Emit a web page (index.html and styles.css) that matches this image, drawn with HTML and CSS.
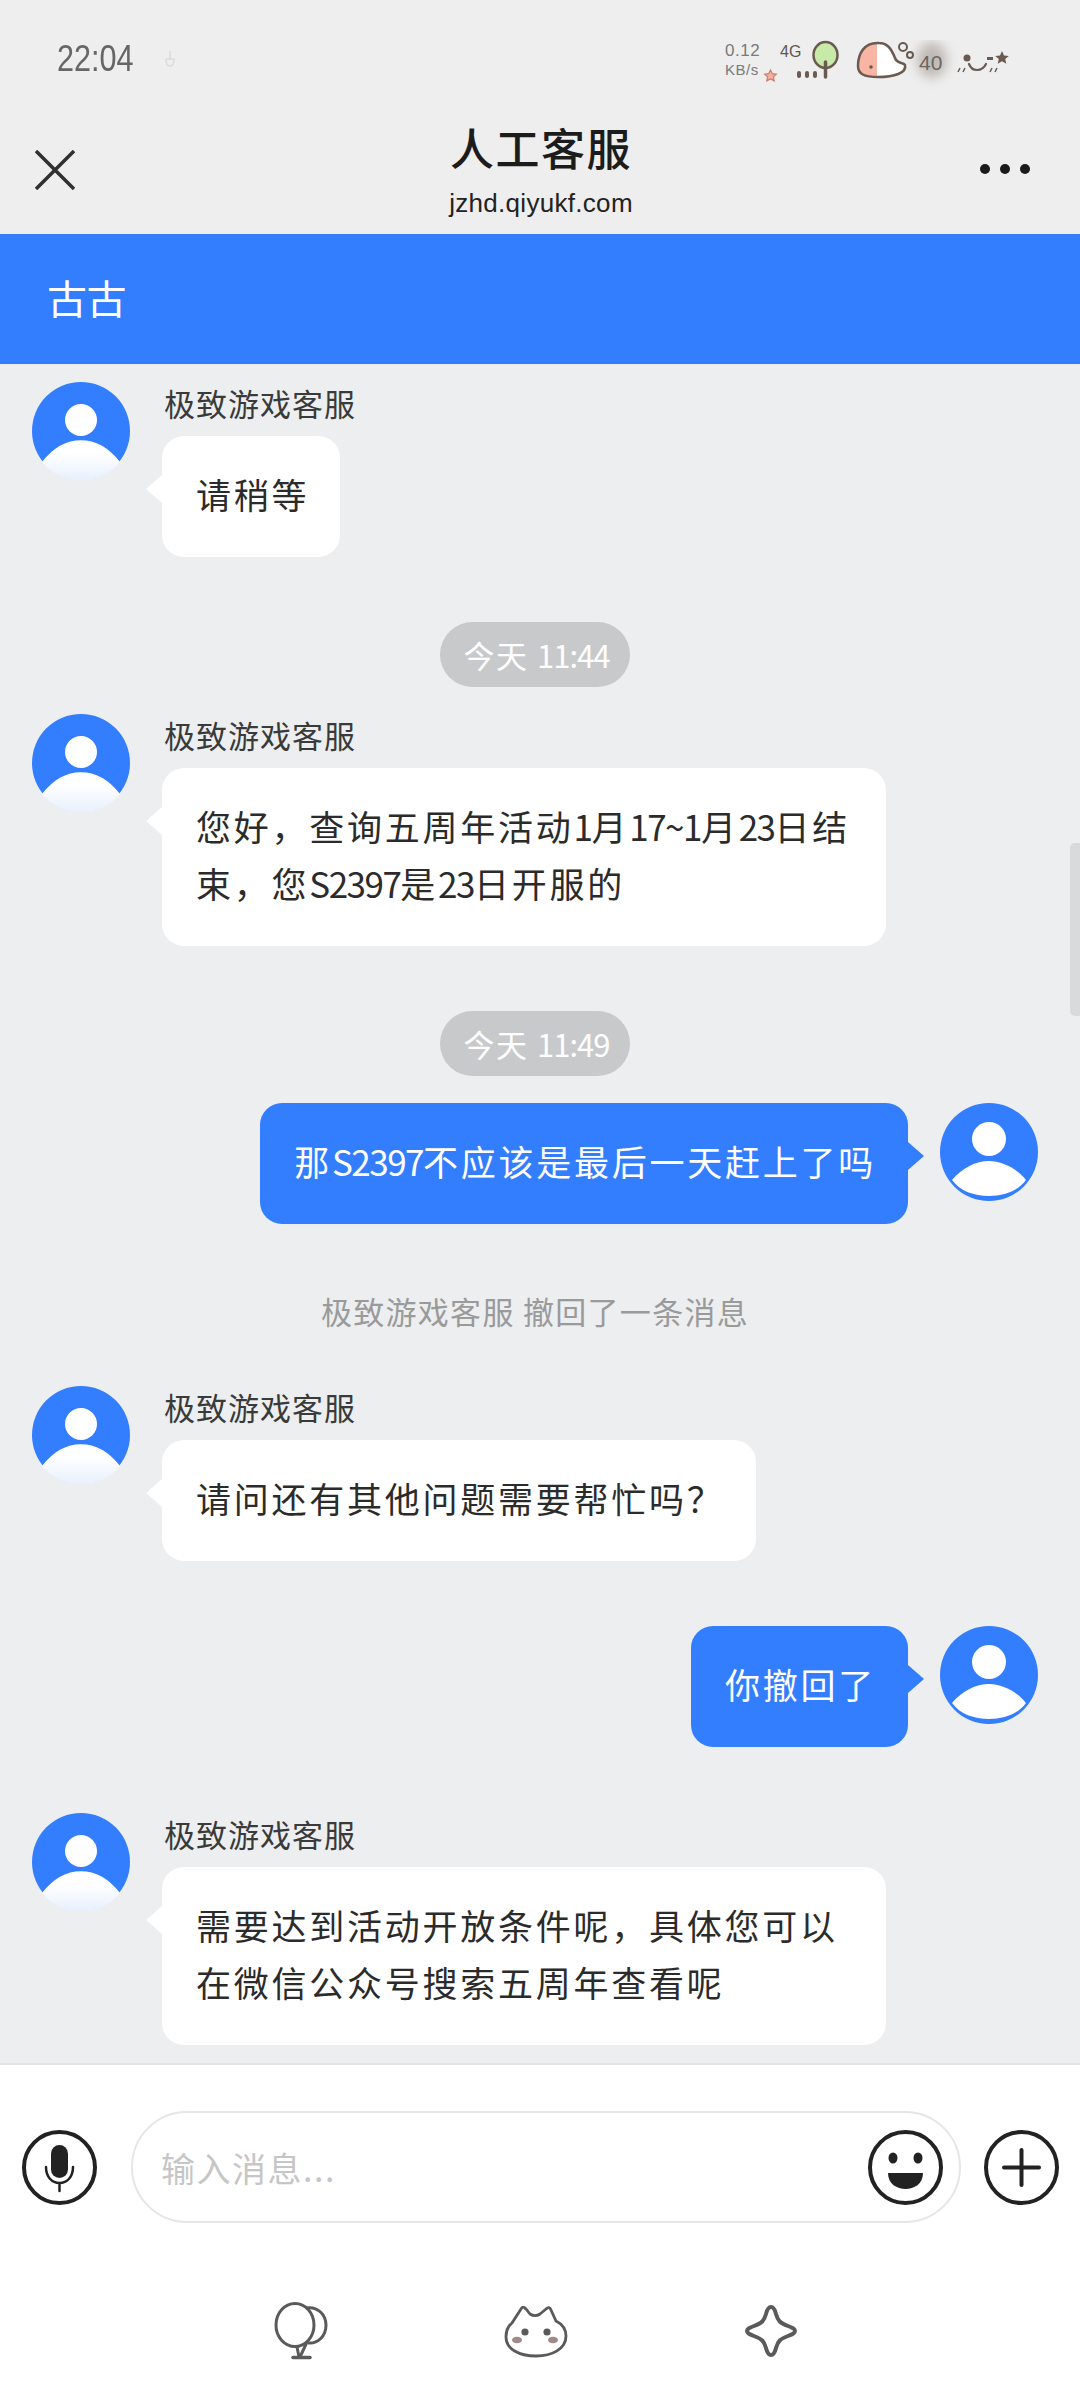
FILE: index.html
```html
<!DOCTYPE html>
<html lang="zh-CN">
<head>
<meta charset="utf-8">
<title>人工客服</title>
<link rel="stylesheet" href="styles.css">
</head>
<body>
<svg class="defs" width="0" height="0" aria-hidden="true">
  <defs>
    <linearGradient id="fade" x1="0" y1="0" x2="0" y2="1">
      <stop offset="0.3" stop-color="#fff"/>
      <stop offset="1" stop-color="#e8f0fd"/>
    </linearGradient>
    <filter id="soft" x="-50%" y="-50%" width="200%" height="200%"><feGaussianBlur stdDeviation="6"/></filter>
    <symbol id="agent" viewBox="0 0 98 98">
      <circle cx="49" cy="49" r="49" fill="#337dff"/>
      <circle cx="49" cy="38" r="16" fill="#fff"/>
      <path d="M11 80C22 66 36 59 49 59C62 59 76 66 87 80A49 49 0 0 1 11 80Z" fill="url(#fade)" stroke="url(#fade)" stroke-width="1.500"/>
    </symbol>
    <symbol id="user" viewBox="0 0 98 98">
      <circle cx="49" cy="49" r="49" fill="#337dff"/>
      <circle cx="49" cy="36" r="17" fill="#fff"/>
      <path d="M12 77C22 65 36 58 49 58C62 58 76 65 86 77C78 88 64 93 49 93C34 93 20 88 12 77Z" fill="#fff"/>
    </symbol>
  </defs>
</svg>
<main class="screen">
  <header class="topbar">
    <div class="status">
      <div class="status-left">
        <span class="clock">22:04</span>
        <svg class="hand" width="14" height="18" viewBox="0 0 14 18"><path d="M7 1V10M3 9C3 14 5 16 7 16C10 16 11 13 11 9Z" fill="none" stroke="#dcdcdc" stroke-width="1.500"/></svg>
      </div>
      <svg class="status-right" width="300" height="50" viewBox="0 0 300 50">
        <ellipse cx="212" cy="20" rx="15" ry="18" fill="#a1968f" opacity="0.6" filter="url(#soft)"/>
        <text x="5" y="16" class="st">0.12</text>
        <text x="5" y="35" class="st small">KB/s</text>
        <path d="M50.500 30l1.800 3.700 4 .5-2.900 2.700.8 4-3.700-2-3.700 2 .8-4-2.900-2.700 4-.5z" fill="#f6b09f" stroke="#c4806e" stroke-width="1.200"/>
        <text x="60" y="17" class="st dark">4G</text>
        <g fill="#6b5a50"><rect x="77" y="31" width="4" height="7" rx="2"/><rect x="85" y="31" width="4" height="7" rx="2"/><rect x="93" y="31" width="4" height="7" rx="2"/></g>
        <ellipse cx="105.500" cy="15" rx="12" ry="13" fill="#c8eaa9" stroke="#6b5a50" stroke-width="2.500"/>
        <path d="M105.500 22V37" stroke="#6b5a50" stroke-width="3.500" stroke-linecap="round"/>
        <path d="M159 3C144 2 138 14 138 26C138 34 144 37 158 37C174 37 187 33 185 25C183 22 177 24 175 18C171 8 167 3 159 3Z" fill="#fff"/>
        <path d="M157 3C144 3 138 14 138 26C138 33 144 36 157 37Z" fill="#f9b5a3"/>
        <path d="M159 3C144 2 138 14 138 26C138 34 144 37 158 37C174 37 187 33 185 25C183 22 177 24 175 18C171 8 167 3 159 3Z" fill="none" stroke="#6b5a50" stroke-width="2.500"/>
        <circle cx="151" cy="27" r="1.800" fill="#6b5a50"/>
        <circle cx="183" cy="7" r="4" fill="none" stroke="#6b5a50" stroke-width="2"/>
        <circle cx="190" cy="15" r="3" fill="none" stroke="#6b5a50" stroke-width="2"/>
        <text x="199" y="30" class="st large">40</text>
        <circle cx="247" cy="18" r="3.500" fill="#6b5a50"/>
        <path d="M249 24C252 32 262 32 266 24" fill="none" stroke="#6b5a50" stroke-width="2.200" stroke-linecap="round"/>
        <rect x="267" y="17" width="6" height="3" fill="#6b5a50"/>
        <path d="M282 11l2 4.500 4.800.4-3.600 3.100 1.100 4.700-4.300-2.500-4.300 2.500 1.100-4.700-3.600-3.100 4.800-.4z" fill="#6b5a50"/>
        <path d="M240 28l-2 4M245 28l-2 4M272 28l-2 4M277 28l-2 4" stroke="#6b5a50" stroke-width="1.500"/>
      </svg>
    </div>
    <div class="titlebar">
      <svg class="close" width="40" height="40" viewBox="0 0 40 40"><path d="M1 1L39 39M39 1L1 39" fill="none" stroke="#303030" stroke-width="3.500"/></svg>
      <div class="title-block">
        <h1 class="title">人工客服</h1>
        <p class="domain">jzhd.qiyukf.com</p>
      </div>
      <svg class="more" width="50" height="12" viewBox="0 0 50 12"><g fill="#1a1a1a"><circle cx="5" cy="6" r="5"/><circle cx="25" cy="6" r="5"/><circle cx="45" cy="6" r="5"/></g></svg>
    </div>
  </header>
  <div class="banner">古古</div>
  <section class="chat">
    <article class="msg">
      <svg class="avatar"><use href="#agent"/></svg>
      <div class="msg-body"><div class="name">极致游戏客服</div><div class="bubble in short">请稍等</div></div>
    </article>
    <div class="pill">今天 <span class="num">11:44</span></div>
    <article class="msg m-after-pill">
      <svg class="avatar"><use href="#agent"/></svg>
      <div class="msg-body"><div class="name">极致游戏客服</div><div class="bubble in wide">您好，查询五周年活动<span class="num">1</span>月<span class="num">17~1</span>月<span class="num">23</span>日结<br>束，您<span class="num">S2397</span>是<span class="num">23</span>日开服的</div></div>
    </article>
    <div class="pill">今天 <span class="num">11:49</span></div>
    <article class="msg out m-after-pill">
      <div class="bubble send">那<span class="num">S2397</span>不应该是最后一天赶上了吗</div>
      <svg class="avatar"><use href="#user"/></svg>
    </article>
    <p class="notice">极致游戏客服 撤回了一条消息</p>
    <article class="msg m-after-notice">
      <svg class="avatar"><use href="#agent"/></svg>
      <div class="msg-body"><div class="name">极致游戏客服</div><div class="bubble in short">请问还有其他问题需要帮忙吗？</div></div>
    </article>
    <article class="msg out m-gap">
      <div class="bubble send">你撤回了</div>
      <svg class="avatar"><use href="#user"/></svg>
    </article>
    <article class="msg m-gap-last">
      <svg class="avatar"><use href="#agent"/></svg>
      <div class="msg-body"><div class="name">极致游戏客服</div><div class="bubble in wide">需要达到活动开放条件呢，具体您可以<br>在微信公众号搜索五周年查看呢</div></div>
    </article>
    <div class="scrollbar"></div>
  </section>
  <footer class="composer">
    <div class="input-row">
      <svg class="round" width="75" height="75" viewBox="0 0 75 75">
        <circle cx="37.500" cy="37.500" r="35.500" fill="#fff" stroke="#222" stroke-width="4"/>
        <rect x="29" y="15" width="17" height="33" rx="8.500" fill="#222"/>
        <path d="M24 37C24 47 30 53 37.500 53C45 53 51 47 51 37M37.500 53V61" fill="none" stroke="#222" stroke-width="2.500" stroke-linecap="round"/>
      </svg>
      <div class="field">
        <span class="placeholder">输入消息...</span>
        <svg class="round" width="75" height="75" viewBox="0 0 75 75">
          <circle cx="37.500" cy="37.500" r="35.500" fill="#fff" stroke="#222" stroke-width="4"/>
          <ellipse cx="25" cy="28" rx="4.500" ry="5.500" fill="#222"/><ellipse cx="50" cy="28" rx="4.500" ry="5.500" fill="#222"/>
          <path d="M20 43H55C55 54 46 59 37.500 59C29 59 20 54 20 43Z" fill="#222"/>
        </svg>
      </div>
      <svg class="round" width="75" height="75" viewBox="0 0 75 75">
        <circle cx="37.500" cy="37.500" r="35.500" fill="#fff" stroke="#222" stroke-width="4"/>
        <path d="M37.500 20V55M20 37.500H55" stroke="#222" stroke-width="4" stroke-linecap="round"/>
      </svg>
    </div>
    <nav class="tools">
      <svg width="54" height="58" viewBox="0 0 54 58" fill="none" stroke="#5a5a5a" stroke-width="3">
        <ellipse cx="21" cy="23" rx="19" ry="21.500"/>
        <path d="M32 6C44 4 52 13 52 23C52 34 44 42 34 41"/>
        <path d="M26 55L33 40M25 55L23 45"/>
        <path d="M19 55.500H36" stroke-width="3.500" stroke-linecap="round"/>
      </svg>
      <svg width="64" height="52" viewBox="0 0 64 52" fill="none" stroke="#5a5a5a" stroke-width="2.800">
        <path d="M8 17L17 3C19 0 20 1 22 3L26 8C29 10 33 10 36 8L42 3C44 1 46 1 47 4L52 15C58 18 62 23 62 30C62 43 48 50 32 50C15 50 2 43 2 31C2 25 4 20 8 17Z"/>
        <circle cx="21" cy="26" r="3.600" fill="#5a5a5a" stroke="none"/><circle cx="43" cy="26" r="3.600" fill="#5a5a5a" stroke="none"/>
        <ellipse cx="13" cy="34" rx="5" ry="3.200" fill="#a08a88" stroke="none"/><ellipse cx="49" cy="34" rx="5" ry="3.200" fill="#a08a88" stroke="none"/>
      </svg>
      <svg width="52" height="52" viewBox="0 0 52 52" fill="none" stroke="#5a5a5a" stroke-width="4">
        <path d="M26 2C29 2 30 5 31 9C33 16 35 18 43 21C48 23 50 24 50 26C50 28 48 29 43 31C35 34 33 36 31 43C30 47 29 50 26 50C23 50 22 47 21 43C19 36 17 34 9 31C4 29 2 28 2 26C2 24 4 23 9 21C17 18 19 16 21 9C22 5 23 2 26 2Z"/>
      </svg>
    </nav>
  </footer>
</main>
</body>
</html>
```

FILE: styles.css
```css
* { box-sizing: border-box; margin: 0; padding: 0; }
html, body { width: 1080px; height: 2400px; overflow: hidden; }
body { font-family: "Noto Sans CJK SC", "Noto Sans", sans-serif; background: #eeeeee; color: #2b2b2b; }
.defs { position: absolute; }
.screen { width: 1080px; height: 2400px; display: flex; flex-direction: column; }

.topbar { height: 234px; background: #eeeeee; flex: none; }
.status { height: 100px; display: flex; justify-content: space-between; padding: 0 60px 0 57px; align-items: flex-start; }
.status-left { display: flex; align-items: center; gap: 16px; padding-top: 38px; }
.clock { display: inline-block; font-family: "Liberation Sans", sans-serif; font-size: 36px; line-height: 42px; letter-spacing: 0; color: #666; transform: scaleX(0.85); transform-origin: left center; }
.status-right { margin-top: 40px; }
.st { font-family: "Liberation Sans", sans-serif; font-size: 17px; fill: #7a7a7a; letter-spacing: 0.500px; }
.st.small { font-size: 15px; }
.st.dark { fill: #5f5650; font-size: 16px; letter-spacing: 0; }
.st.large { font-size: 21px; fill: #6d6560; letter-spacing: 0; }
.titlebar { height: 134px; display: flex; align-items: flex-start; justify-content: space-between; padding: 0 50px 0 35px; }
.close { margin-top: 50px; }
.more { margin-top: 63px; }
.title-block { display: flex; flex-direction: column; align-items: center; margin-left: 27px; }
.title { font-size: 44px; line-height: 60px; font-weight: 500; letter-spacing: 1.500px; color: #1c1c1c; margin-top: 17px; }
.domain { font-family: "Liberation Sans", sans-serif; font-size: 26px; line-height: 36px; color: #222; letter-spacing: 0.300px; margin-top: 8px; }

.banner { height: 130px; flex: none; background: #337dff; color: #fff; font-size: 40px; line-height: 127px; padding-left: 47px; letter-spacing: -0.500px; }

.chat { position: relative; flex: 1; min-height: 0; background: #eceef0; overflow: hidden; display: flex; flex-direction: column; padding-top: 18px; }
.msg { display: flex; align-items: flex-start; padding: 0 42px 0 32px; }
.msg.out { justify-content: flex-end; }
.avatar { width: 98px; height: 98px; flex: none; }
.msg-body { margin-left: 32px; display: flex; flex-direction: column; align-items: flex-start; }
.name { height: 54px; font-size: 31px; line-height: 42px; padding-left: 2px; color: #3a3a3a; letter-spacing: 1px; }
.bubble { position: relative; border-radius: 22px; font-size: 35px; line-height: 57px; padding: 29px 34px 35px; letter-spacing: 2.750px; }
.bubble::before { content: ""; position: absolute; top: 39px; border-top: 14px solid transparent; border-bottom: 14px solid transparent; }
.num { letter-spacing: -1.500px; }
.in { background: #fff; color: #2b2b2b; }
.in::before { left: -16px; border-right: 16px solid #fff; }
.short { padding-right: 31px; }
.send { background: #337dff; color: #fff; margin-right: 32px; padding-right: 32px; }
.send::before { right: -16px; border-left: 16px solid #337dff; }
.wide { width: 724px; }
.pill { align-self: center; margin-left: -10px; height: 65px; padding: 0 21px 0 24px; border-radius: 33px; background: #c8c9cb; color: #fff; font-size: 31px; line-height: 65px; letter-spacing: 1.500px; margin-top: 65px; }
.pill .num { letter-spacing: -1px; }
.m-after-pill { margin-top: 27px; }
.notice { text-align: center; font-size: 31px; line-height: 44px; color: #9a9a9a; letter-spacing: 1.300px; margin-top: 65px; padding-right: 10px; }
.m-after-notice { margin-top: 53px; }
.m-gap { margin-top: 65px; }
.m-gap-last { margin-top: 66px; }
.scrollbar { position: absolute; right: 0; top: 479px; width: 10px; height: 173px; background: #d9dadc; border-radius: 5px 0 0 5px; }

.composer { height: 337px; flex: none; background: #fff; border-top: 2px solid #e4e4e4; display: flex; flex-direction: column; }
.input-row { display: flex; align-items: center; padding: 45px 22px 0; height: 159px; }
.field { width: 830px; height: 112px; margin-left: 34px; margin-right: 23px; border: 2px solid #e6e6e6; border-radius: 56px; display: flex; align-items: center; justify-content: space-between; padding: 0 16px 0 28px; flex: none; }
.placeholder { font-size: 34px; color: #c6c6c6; letter-spacing: 1.500px; }
.round { flex: none; }
.tools { display: flex; align-items: flex-start; padding: 78px 0 0 274px; }
.tools svg:nth-child(2) { margin: 4px 0 0 176px; }
.tools svg:nth-child(3) { margin: 3px 0 0 177px; }
```
